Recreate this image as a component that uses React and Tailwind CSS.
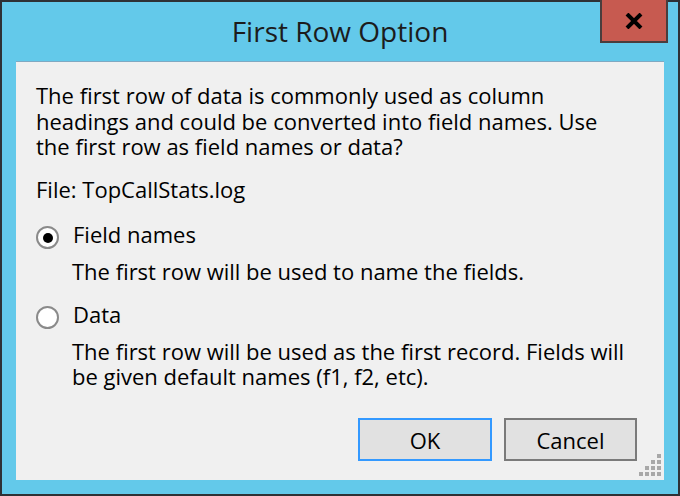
import React from "react";

const font = { fontFamily: "'Open Sans', 'Noto Sans', sans-serif" };

function Radio({ checked }) {
  return (
    <div className="mt-[4px] w-[23px] h-[23px] rounded-full border-2 border-[#8a8a8a] bg-white flex items-center justify-center flex-shrink-0">
      {checked && <div className="w-[10px] h-[10px] rounded-full bg-black" />}
    </div>
  );
}

function Grip() {
  const dots = [
    [18, 0],
    [12, 6], [18, 6],
    [6, 12], [12, 12], [18, 12],
    [0, 18], [6, 18], [12, 18], [18, 18],
  ];
  return (
    <svg width="22" height="22" viewBox="0 0 22 22" className="absolute right-[3px] bottom-[4px]">
      {dots.map(([x, y]) => (
        <rect key={`${x}-${y}`} x={x} y={y} width="4" height="4" fill="#a8a8a8" />
      ))}
    </svg>
  );
}

export default function App() {
  return (
    <div className="relative w-[680px] h-[496px] bg-[#2e3135] p-[2px] text-black" style={font}>
      <div className="w-full h-full bg-[#63c9ea] flex flex-col">
        {/* Title bar */}
        <div className="h-[59px] flex items-center justify-center pb-[2px]">
          <span className="text-[28px] text-[#1c1c1c]">First Row Option</span>
        </div>

        {/* Client area */}
        <div className="relative mx-[14px] flex-1 bg-[#f0f0f0] border-t border-[#7fa9c2] pl-[20px] pt-[21px] text-[22px] leading-[25.5px]">
          <p>
            The first row of data is commonly used as column
            <br />
            headings and could be converted into field names. Use
            <br />
            the first row as field names or data?
          </p>
          <p className="mt-[17px]">File: TopCallStats.log</p>

          <div className="mt-[20px] flex items-start">
            <Radio checked />
            <span className="ml-[14px]">Field names</span>
          </div>
          <p className="ml-[36px] mt-[10px]">The first row will be used to name the fields.</p>

          <div className="mt-[17px] flex items-start">
            <Radio />
            <span className="ml-[14px]">Data</span>
          </div>
          <p className="ml-[36px] mt-[10px]">
            The first row will be used as the first record. Fields will
            <br />
            be given default names (f1, f2, etc).
          </p>

          <div className="absolute left-[342px] top-[356px] flex gap-[12px]">
            <button className="w-[134px] h-[43px] bg-[#e1e1e1] border-2 border-[#3399ff] text-[22px] leading-none">
              OK
            </button>
            <button className="w-[133px] h-[43px] bg-[#e1e1e1] border-2 border-[#7a7a7a] text-[22px] leading-none">
              Cancel
            </button>
          </div>

          <Grip />
        </div>

        <div className="h-[14px]" />
      </div>

      {/* Close button */}
      <div className="absolute left-[600px] top-0 w-[68px] h-[43px] bg-[#c75a50] border-2 border-t-0 border-[#4a3d3d] flex items-center justify-center">
        <svg width="18" height="16" viewBox="0 0 18 16">
          <path d="M2 1 L16 15 M16 1 L2 15" stroke="#000" strokeWidth="4" />
        </svg>
      </div>
    </div>
  );
}
